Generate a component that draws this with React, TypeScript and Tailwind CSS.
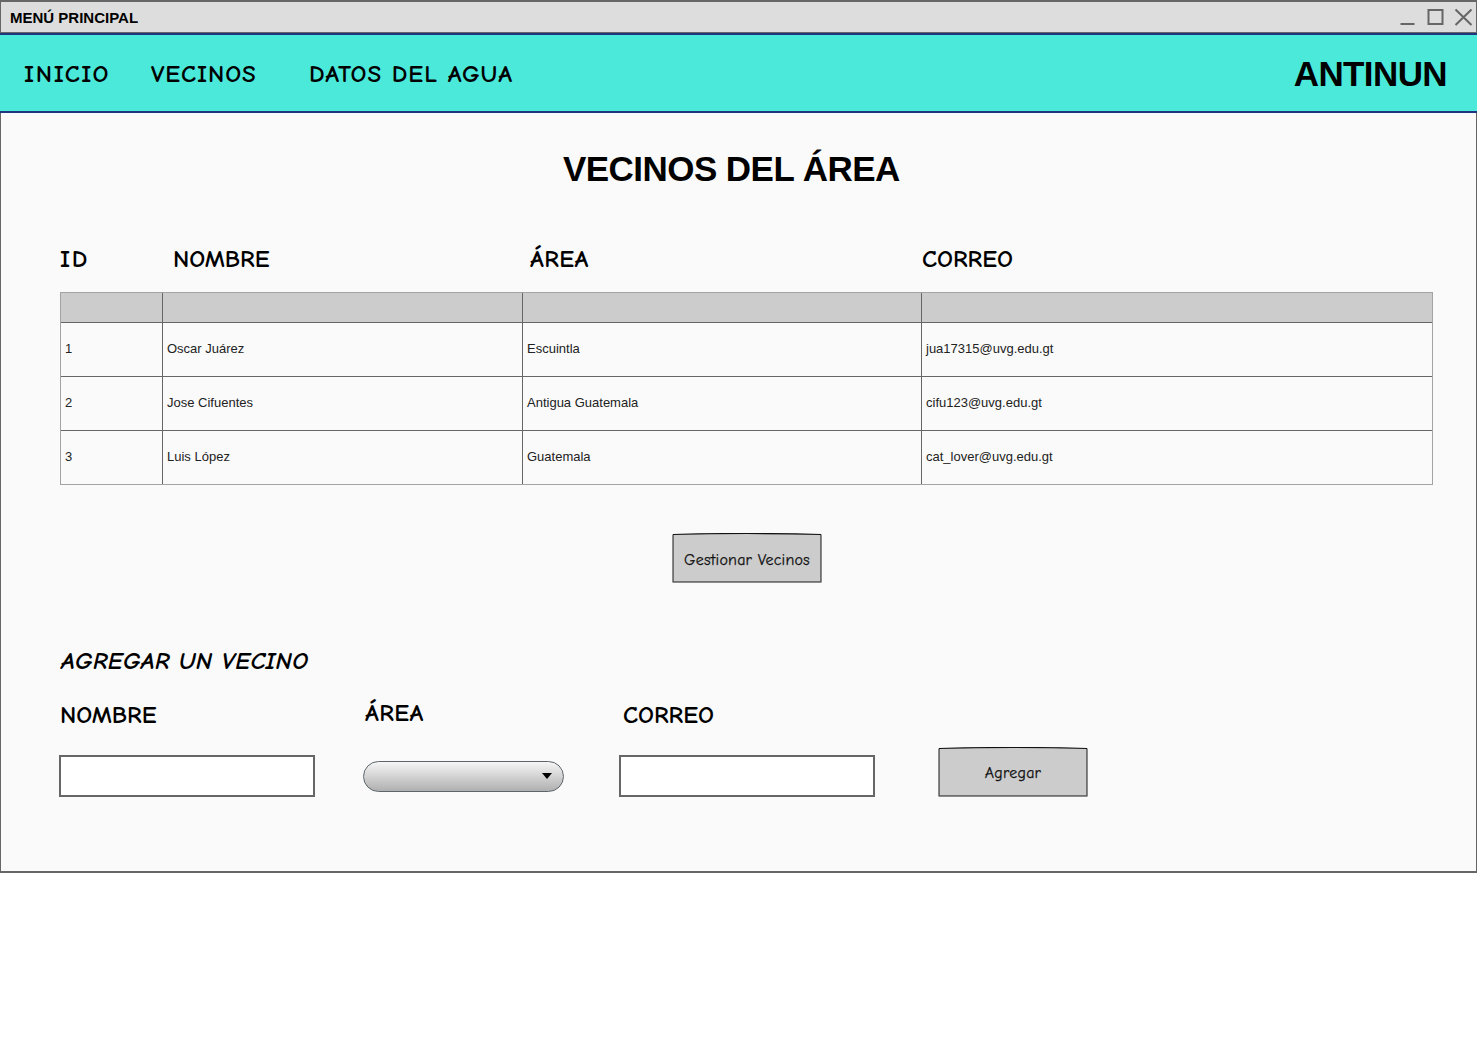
import type { ReactNode } from "react";

const neighbors = [
  { id: "1", name: "Oscar Juárez", area: "Escuintla", mail: "jua17315@uvg.edu.gt" },
  { id: "2", name: "Jose Cifuentes", area: "Antigua Guatemala", mail: "cifu123@uvg.edu.gt" },
  { id: "3", name: "Luis López", area: "Guatemala", mail: "cat_lover@uvg.edu.gt" },
];

function Hand({ className, children }: { className: string; children: ReactNode }) {
  return (
    <span className={`font-['Comic_Neue','Noto_Sans',sans-serif] text-[25px] leading-8 font-bold whitespace-nowrap ${className}`}>
      {children}
    </span>
  );
}

function SketchButton({ className, children }: { className: string; children: ReactNode }) {
  return (
    <button type="button" className={`relative flex h-[50px] w-[150px] items-center justify-center font-['Comic_Neue','Noto_Sans',sans-serif] text-[16px] tracking-[0.2px] text-[#111] ${className}`}>
      <svg className="absolute inset-0" width="150" height="50" viewBox="0 0 150 50">
        <path d="M1 1.5Q75 -0.5 149 1.5V49H1Z" fill="#ccc" />
        <path d="M1 1.5V49H149V1.5" fill="none" stroke="#000" strokeOpacity=".6" strokeWidth="1.5" strokeLinejoin="round" />
        <path d="M1 1.5Q75 -0.5 149 1.5" fill="none" stroke="#111" strokeWidth="1.2" />
      </svg>
      <span className="relative [-webkit-text-stroke:0.25px_#111]">{children}</span>
    </button>
  );
}

function TextField() {
  return <input className="h-[42px] w-[256px] border-2 border-[#666] bg-white px-2 outline-none" />;
}

export default function App() {
  return (
    <div className="min-h-[1051px] w-[1477px] bg-white font-['Liberation_Sans',Arial,sans-serif] text-black">
      <div className="h-[873px] border-x border-y-2 border-[#666] bg-[#fafafa]">
        <header className="flex h-[31px] items-center justify-between border-b border-[#666] bg-[#ddd] pr-[3px] pl-[9px]">
          <span className="text-[15px] leading-none font-bold">MENÚ PRINCIPAL</span>
          <svg width="73" height="18" viewBox="0 0 73 18" fill="none" stroke="#666" strokeWidth="2">
            <path d="M0.5 16H14.5M28.5 2H42.5V16H28.5ZM55.5 1.5L71.5 17M71.5 1.5L55.5 17" />
          </svg>
        </header>

        <nav className="-mx-px flex h-20 items-center justify-between border-y-2 border-[#20357f] bg-[#4ae9da] pr-[30px] pl-6">
          <div className="flex pt-px">
            <Hand className="w-[127px] tracking-[1.6px]">INICIO</Hand>
            <Hand className="w-[158px] tracking-[0.9px]">VECINOS</Hand>
            <Hand className="tracking-[0.95px]">DATOS DEL AGUA</Hand>
          </div>
          <span className="text-[35px] leading-none font-bold tracking-[-0.6px]">ANTINUN</span>
        </nav>

        <main className="pl-[59px]">
          <h1 className="ml-[503px] pt-[36px] text-[35px] leading-10 font-bold tracking-[-0.55px]">VECINOS DEL ÁREA</h1>

          <div className="mt-[54px] flex h-8">
            <Hand className="w-[113px] tracking-[1.5px]">ID</Hand>
            <Hand className="w-[357px]">NOMBRE</Hand>
            <Hand className="w-[392px] tracking-[0.4px]">ÁREA</Hand>
            <Hand className="">CORREO</Hand>
          </div>

          <table className="mt-[17px] w-[1373px] table-fixed border-separate border-spacing-0 border border-[#a3a3a3] text-[13px] text-[#222]">
            <colgroup>
              <col className="w-[102px]" />
              <col className="w-[360px]" />
              <col className="w-[399px]" />
              <col className="w-[510px]" />
            </colgroup>
            <thead>
              <tr className="h-[30px] bg-[#ccc]">
                <th className="border-r border-b border-[#666]" />
                <th className="border-r border-b border-[#666]" />
                <th className="border-r border-b border-[#666]" />
                <th className="border-b border-[#666]" />
              </tr>
            </thead>
            <tbody>
              {neighbors.map((n) => (
                <tr key={n.id} className="group h-[54px] last:h-[53px]">
                  <td className="border-r border-b border-[#666] px-1 pt-0 pb-0.5 group-last:border-b-0">{n.id}</td>
                  <td className="border-r border-b border-[#666] px-1 pt-0 pb-0.5 group-last:border-b-0">{n.name}</td>
                  <td className="border-r border-b border-[#666] px-1 pt-0 pb-0.5 group-last:border-b-0">{n.area}</td>
                  <td className="border-b border-[#666] px-1 pt-0 pb-0.5 group-last:border-b-0">{n.mail}</td>
                </tr>
              ))}
            </tbody>
          </table>

          <SketchButton className="mt-12 ml-[612px] pt-[3px]">Gestionar Vecinos</SketchButton>

          <h2 className="mt-[62px] flex pl-px">
            <Hand className="tracking-[0.25px] italic">AGREGAR UN VECINO</Hand>
          </h2>

          <form className="-ml-px mt-5 flex items-start">
            <label className="flex w-[305px] flex-col pt-0.5">
              <Hand className="mb-6 pl-px">NOMBRE</Hand>
              <TextField />
            </label>
            <div className="flex w-[255px] flex-col">
              <Hand className="pl-px tracking-[0.4px]">ÁREA</Hand>
              <button type="button" className="mt-[32px] -ml-px flex h-[31px] w-[201px] items-center justify-end rounded-full border border-[#5c666b] bg-linear-to-b from-[#f6f6f6] to-[#b0b0b0] pr-[11px] pb-0.5">
                <svg width="10" height="6" viewBox="0 0 10 6">
                  <path d="M0 0H10L5 6Z" />
                </svg>
              </button>
            </div>
            <label className="flex w-[319px] flex-col pt-0.5">
              <Hand className="mb-6 pl-1">CORREO</Hand>
              <TextField />
            </label>
            <SketchButton className="mt-[50px] pt-px">Agregar</SketchButton>
          </form>
        </main>
      </div>
    </div>
  );
}
